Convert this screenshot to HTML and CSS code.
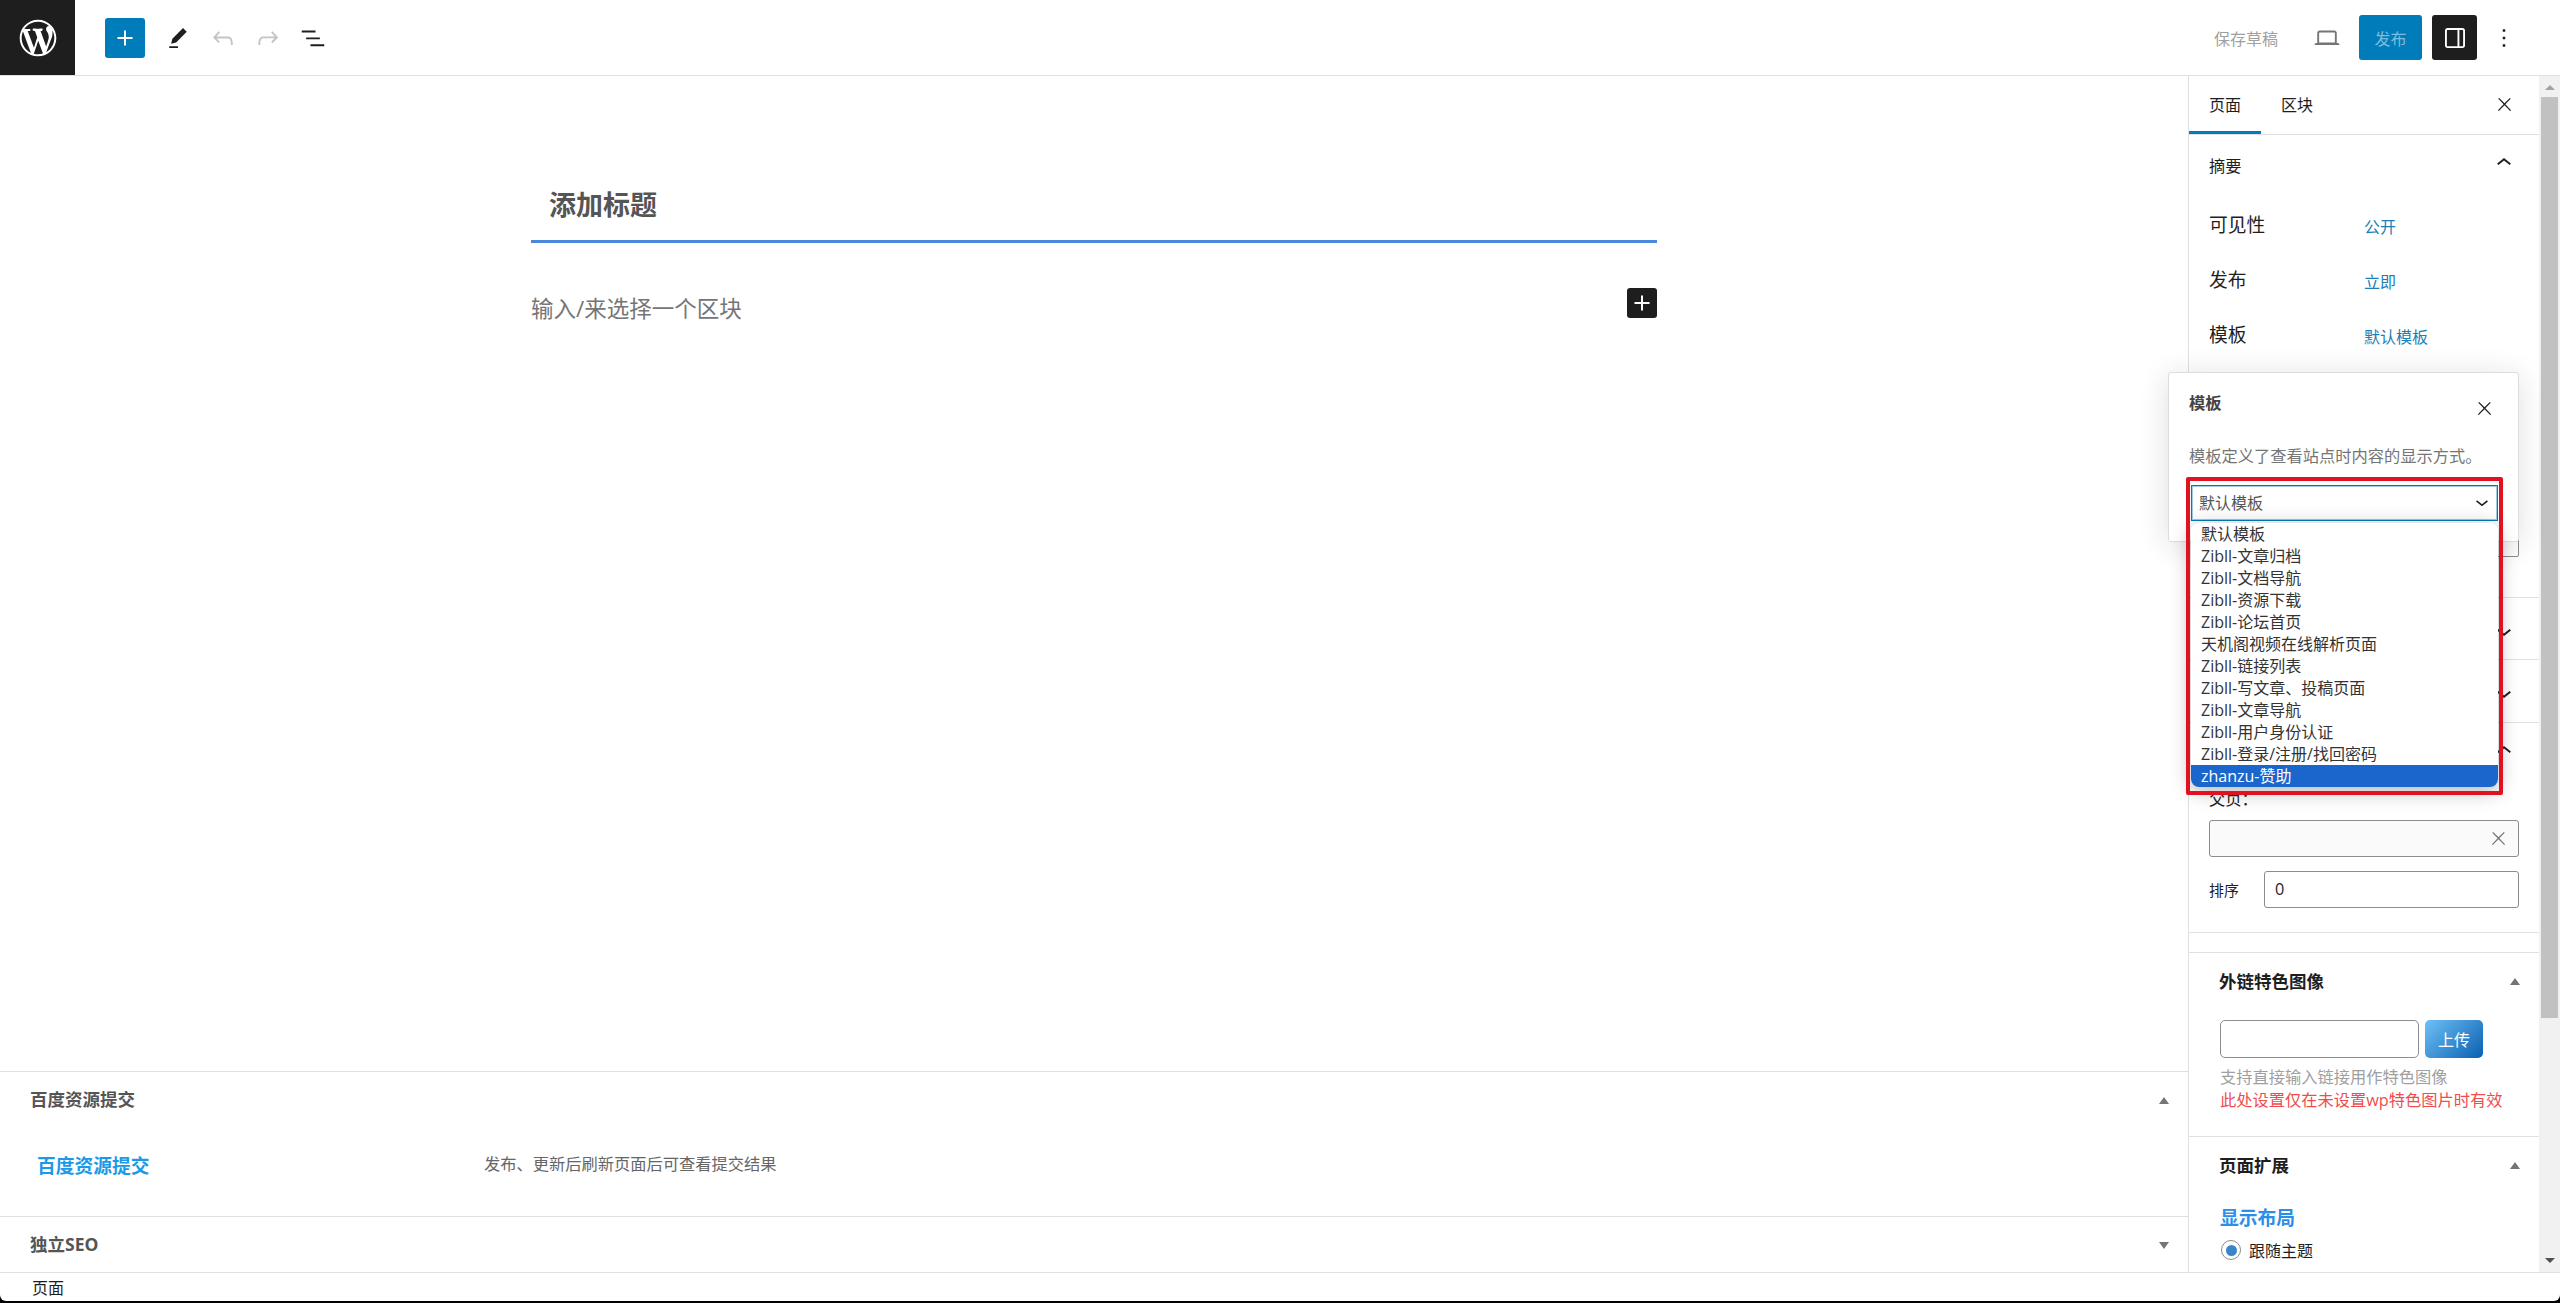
FILE: index.html
```html
<!DOCTYPE html>
<html lang="zh-CN">
<head>
<meta charset="utf-8">
<title>编辑页面</title>
<link rel="stylesheet" href="styles.css">
</head>
<body>
<svg class="sprite" aria-hidden="true">
  <symbol id="i-plus" viewBox="0 0 24 24"><path d="M18 11.2h-5.2V6h-1.6v5.2H6v1.6h5.2V18h1.6v-5.2H18z"/></symbol>
  <symbol id="i-pencil" viewBox="0 0 24 24"><path d="m19 7-3-3-8.5 8.5-1 4 4-1L19 7Zm-7 11.5H5V20h7v-1.5Z"/></symbol>
  <symbol id="i-undo" viewBox="0 0 24 24"><path d="M18.3 11.7c-.6-.6-1.4-.9-2.3-.9H6.7l2.9-3.3-1.1-1-4.5 5L8.5 16l1-1-2.7-2.7H16c.5 0 .9.2 1.3.5 1 1 1 3.4 1 4.5v.3h1.5v-.2c0-1.5 0-4.3-1.5-5.7z"/></symbol>
  <symbol id="i-redo" viewBox="0 0 24 24"><path d="M15.6 6.5l-1.1 1 2.9 3.3H8c-.9 0-1.7.3-2.3.9-1.4 1.5-1.4 4.2-1.4 5.6v.2h1.5v-.3c0-1.1 0-3.5 1-4.5.3-.3.7-.5 1.3-.5h9.2L14.5 15l1.1 1.1 4.6-4.6-4.6-5z"/></symbol>
  <symbol id="i-list" viewBox="0 0 24 24"><path d="M3 6h11v1.5H3V6Zm3.5 5.5h11V13h-11v-1.5ZM21 17H10v1.5h11V17Z"/></symbol>
  <symbol id="i-laptop" viewBox="0 0 24 24"><path d="M20.5 16h-.7V8c0-1.1-.9-2-2-2H6.2c-1.1 0-2 .9-2 2v8h-.7c-.8 0-1.5.7-1.5 1.5h20c0-.8-.7-1.5-1.5-1.5zM5.700 8c0-.3.2-.5.5-.5h11.600c.3 0 .5.2.5.5v7.600H5.700V8z"/></symbol>
  <symbol id="i-drawer" viewBox="0 0 24 24"><path d="M18 4H6c-1.100 0-2 .9-2 2v12c0 1.100.9 2 2 2h12c1.100 0 2-.9 2-2V6c0-1.100-.9-2-2-2zm-4 14.500H6c-.3 0-.5-.2-.5-.5V6c0-.3.2-.5.5-.5h8v13zm4.500-.5c0 .3-.2.500-.5.500h-2.500v-13H18c.3 0 .5.200.5.500v12z"/></symbol>
  <symbol id="i-more" viewBox="0 0 24 24"><path d="M13 19h-2v-2h2v2zm0-6h-2v-2h2v2zm0-6h-2V5h2v2z"/></symbol>
  <symbol id="i-close" viewBox="0 0 24 24"><path d="M13 11.800l6.100-6.300-1-1-6.100 6.200-6.100-6.200-1 1 6.100 6.300-6.500 6.700 1 1 6.500-6.600 6.500 6.600 1-1z"/></symbol>
  <symbol id="i-up" viewBox="0 0 24 24"><path d="M6.500 12.400L12 8l5.500 4.400-.9 1.200L12 10l-4.500 3.600-1-1.200z"/></symbol>
  <symbol id="i-down" viewBox="0 0 24 24"><path d="M17.500 11.600L12 16l-5.500-4.400.9-1.200L12 14l4.500-3.600 1 1.200z"/></symbol>
</svg>

<div class="app">
  <header class="topbar">
    <div class="topbar-left">
      <a class="wp-logo" href="#" aria-label="WordPress">
        <svg class="wp-mark" viewBox="-2 -2 24 24"><path d="M20 10c0-5.510-4.490-10-10-10C4.480 0 0 4.490 0 10c0 5.520 4.480 10 10 10 5.510 0 10-4.480 10-10zM7.780 15.370L4.370 6.220c.550-.020 1.170-.080 1.170-.080.500-.060.440-1.130-.060-1.110 0 0-1.450.110-2.370.110-.180 0-.370 0-.580-.010C4.120 2.690 6.870 1.110 10 1.110c2.330 0 4.450.870 6.050 2.340-.680-.110-1.650.390-1.650 1.580 0 .740.450 1.360.900 2.100.350.610.550 1.360.550 2.460 0 1.490-1.400 5-1.400 5l-3.030-8.370c.540-.020.820-.170.820-.170.500-.050.440-1.250-.060-1.220 0 0-1.440.120-2.380.120-.870 0-2.330-.120-2.330-.120-.500-.030-.560 1.200-.060 1.220l.920.080 1.260 3.410zM17.410 10c.240-.640.740-1.870.430-4.250.700 1.290 1.050 2.710 1.050 4.250 0 3.290-1.730 6.240-4.400 7.780.970-2.590 1.940-5.200 2.920-7.780zM6.100 18.090C3.120 16.650 1.110 13.530 1.110 10c0-1.300.230-2.480.720-3.590C3.250 10.300 4.670 14.200 6.100 18.090zm4.030-6.630l2.580 6.980c-.860.290-1.760.450-2.710.450-.790 0-1.570-.110-2.290-.330.810-2.380 1.620-4.740 2.420-7.100z"/></svg>
      </a>
      <button class="btn-inserter" aria-label="添加区块"><svg class="icon"><use href="#i-plus"/></svg></button>
      <div class="tools">
        <button class="tool" aria-label="工具"><svg class="icon"><use href="#i-pencil"/></svg></button>
        <button class="tool is-disabled" aria-label="撤销"><svg class="icon"><use href="#i-undo"/></svg></button>
        <button class="tool is-disabled" aria-label="重做"><svg class="icon"><use href="#i-redo"/></svg></button>
        <button class="tool" aria-label="列表视图"><svg class="icon"><use href="#i-list"/></svg></button>
      </div>
    </div>
    <div class="topbar-right">
      <span class="save-draft">保存草稿</span>
      <button class="tool is-muted" aria-label="预览"><svg class="icon"><use href="#i-laptop"/></svg></button>
      <button class="btn-publish">发布</button>
      <button class="btn-settings" aria-label="设置"><svg class="icon"><use href="#i-drawer"/></svg></button>
      <button class="tool btn-more" aria-label="选项"><svg class="icon"><use href="#i-more"/></svg></button>
    </div>
  </header>

  <div class="workspace">
    <main class="content">
      <div class="canvas">
        <div class="editor">
          <h1 class="post-title">添加标题</h1>
          <div class="block-row">
            <p class="block-placeholder">输入/来选择一个区块</p>
            <button class="block-add" aria-label="添加区块"><svg class="icon"><use href="#i-plus"/></svg></button>
          </div>
        </div>
      </div>
      <section class="meta-box meta-box-open">
        <div class="meta-head"><h2 class="meta-title">百度资源提交</h2><span class="tri tri-up"></span></div>
        <div class="meta-body">
          <strong class="meta-label">百度资源提交</strong>
          <span class="meta-desc">发布、更新后刷新页面后可查看提交结果</span>
        </div>
      </section>
      <section class="meta-box meta-box-closed">
        <div class="meta-head"><h2 class="meta-title">独立SEO</h2><span class="tri tri-down"></span></div>
      </section>
    </main>

    <aside class="sidebar">
      <div class="sidebar-body">
        <div class="tabs">
          <span class="tab is-active">页面</span>
          <span class="tab">区块</span>
          <svg class="icon-close tabs-close"><use href="#i-close"/></svg>
        </div>

        <section class="panel panel-summary">
          <div class="panel-head"><h3 class="panel-title">摘要</h3><svg class="icon"><use href="#i-up"/></svg></div>
          <div class="sum-row"><span class="sum-label">可见性</span><span class="sum-value">公开</span></div>
          <div class="sum-row"><span class="sum-label">发布</span><span class="sum-value">立即</span></div>
          <div class="sum-row"><span class="sum-label">模板</span><span class="sum-value">默认模板</span></div>
          <div class="hidden-field"></div>
        </section>

        <section class="panel panel-collapsed panel-c1"><svg class="icon"><use href="#i-down"/></svg></section>
        <section class="panel panel-collapsed panel-c2"><svg class="icon"><use href="#i-down"/></svg></section>

        <section class="panel panel-attrs">
          <div class="attrs-head"><svg class="icon"><use href="#i-up"/></svg></div>
          <div class="attr-label">父页：</div>
          <div class="parent-field"><svg class="icon-close"><use href="#i-close"/></svg></div>
          <div class="order-row"><span class="order-label">排序</span><div class="order-field">0</div></div>
        </section>

        <div class="panel panel-spacer"></div>

        <section class="panel panel-image">
          <div class="box-head"><h3 class="box-title">外链特色图像</h3><span class="tri tri-up"></span></div>
          <div class="upload-row"><div class="upload-field"></div><button class="upload-btn">上传</button></div>
          <p class="help">支持直接输入链接用作特色图像</p>
          <p class="warn">此处设置仅在未设置wp特色图片时有效</p>
        </section>

        <section class="panel panel-ext">
          <div class="box-head"><h3 class="box-title">页面扩展</h3><span class="tri tri-up"></span></div>
          <div class="layout-title">显示布局</div>
          <label class="radio-row"><span class="radio"></span>跟随主题</label>
        </section>
      </div>

      <div class="scrollbar">
        <span class="sb-arrow sb-arrow-up"></span>
        <div class="sb-thumb"></div>
        <span class="sb-arrow sb-arrow-down"></span>
      </div>
    </aside>
  </div>

  <footer class="statusbar">页面</footer>

  <div class="popover">
    <div class="popover-head"><h4 class="popover-title">模板</h4><svg class="icon-close popover-close"><use href="#i-close"/></svg></div>
    <p class="popover-desc">模板定义了查看站点时内容的显示方式。</p>
  </div>
  <div class="select-box">默认模板<svg class="select-chev"><use href="#i-down"/></svg></div>
  <ul class="select-list">
    <li>默认模板</li>
    <li>Zibll-文章归档</li>
    <li>Zibll-文档导航</li>
    <li>Zibll-资源下载</li>
    <li>Zibll-论坛首页</li>
    <li>天机阁视频在线解析页面</li>
    <li>Zibll-链接列表</li>
    <li>Zibll-写文章、投稿页面</li>
    <li>Zibll-文章导航</li>
    <li>Zibll-用户身份认证</li>
    <li>Zibll-登录/注册/找回密码</li>
    <li class="is-selected">zhanzu-赞助</li>
  </ul>
  <div class="highlight"></div>
</div>
</body>
</html>
```
FILE: styles.css
```css
* { box-sizing: border-box; }
html, body { margin: 0; padding: 0; }
body {
  background: #000;
  color: #1e1e1e;
  font-family: "Open Sans", "Noto Sans CJK SC", sans-serif;
  font-size: 16.25px;
  height: 1303px;
  overflow: hidden;
}
h1, h2, h3, h4, p, ul { margin: 0; padding: 0; }
button { border: 0; background: none; padding: 0; font: inherit; color: inherit; }
.sprite { display: none; }
.icon { width: 30px; height: 30px; fill: currentColor; display: block; flex: none; }
.icon-close { width: 21px; height: 21px; fill: currentColor; display: block; flex: none; }

.app {
  position: relative;
  width: 2560px;
  height: 1301px;
  background: #fff;
  border-radius: 0 0 6px 6px;
  overflow: hidden;
  display: flex;
  flex-direction: column;
}

/* top bar */
.topbar {
  height: 76px;
  flex: none;
  border-bottom: 1px solid #e0e0e0;
  display: flex;
  justify-content: space-between;
  align-items: center;
}
.topbar-left, .topbar-right, .tools { display: flex; align-items: center; }
.wp-logo {
  width: 75px;
  height: 75px;
  background: #1e1e1e;
  color: #fff;
  display: flex;
  align-items: center;
  justify-content: center;
}
.wp-mark { width: 44px; height: 44px; fill: currentColor; display: block; }
.btn-inserter {
  width: 40px;
  height: 40px;
  margin-left: 30px;
  border-radius: 3px;
  background: #007cba;
  color: #fff;
  display: flex;
  align-items: center;
  justify-content: center;
}
.tools { margin-left: 10px; }
.tool {
  width: 45px;
  height: 45px;
  display: flex;
  align-items: center;
  justify-content: center;
  color: #1e1e1e;
}
.tool.is-disabled { color: #c4c4c4; }
.tool.is-muted { color: #757575; }
.topbar-right { padding-right: 34px; }
.save-draft { color: #a0a0a0; font-size: 16px; margin-right: 26px; }
.btn-publish {
  width: 63px;
  height: 45px;
  margin-left: 10px;
  border-radius: 3px;
  background: #007cba;
  color: #7cbcdc;
  font-size: 16px;
}
.btn-settings {
  width: 45px;
  height: 45px;
  margin-left: 10px;
  border-radius: 3px;
  background: #1e1e1e;
  color: #fff;
  display: flex;
  align-items: center;
  justify-content: center;
}
.btn-more { margin-left: 4px; }

/* workspace */
.workspace { flex: 1; display: flex; min-height: 0; }
.content { width: 2188px; flex: none; display: flex; flex-direction: column; }
.canvas { flex: 1; }
.editor { width: 1126px; margin: 0 auto; padding-top: 99px; }
.post-title {
  font-size: 27px;
  font-weight: 700;
  line-height: 60px;
  color: #555;
  padding: 0 18px 5px;
  border-bottom: 3px solid #4a88da;
}
.block-row { display: flex; justify-content: space-between; align-items: flex-start; margin-top: 45px; }
.block-placeholder { font-size: 22.5px; line-height: 40px; color: #757575; padding-top: 1px; }
.block-add {
  width: 30px;
  height: 30px;
  border-radius: 3px;
  background: #1e1e1e;
  color: #fff;
  display: flex;
  align-items: center;
  justify-content: center;
}

.meta-box { border-top: 1px solid #e0e0e0; flex: none; }
.meta-box-open { height: 145px; }
.meta-box-closed { height: 56px; }
.meta-head {
  height: 56px;
  padding: 0 19px 0 30px;
  display: flex;
  justify-content: space-between;
  align-items: center;
}
.meta-title { font-size: 17.5px; font-weight: 700; color: #555; margin-top: -3px; }
.meta-body { display: flex; align-items: center; height: 72px; padding-left: 37px; }
.meta-label { width: 447px; font-size: 18.75px; font-weight: 700; color: #1a9ae8; }
.meta-desc { color: #666; margin-top: -2px; }

.tri { width: 0; height: 0; border-left: 5px solid transparent; border-right: 5px solid transparent; display: block; }
.tri-up { border-bottom: 7px solid #757575; }
.tri-down { border-top: 7px solid #757575; }

/* sidebar */
.sidebar { flex: 1; display: flex; border-left: 1px solid #e0e0e0; min-width: 0; }
.sidebar-body { width: 350px; flex: none; overflow: hidden; }
.tabs {
  height: 59px;
  border-bottom: 1px solid #e0e0e0;
  display: flex;
  align-items: stretch;
}
.tab { padding: 0 20px 2px; display: flex; align-items: center; font-size: 16px; }
.tab.is-active { box-shadow: inset 0 -3px 0 #007cba; }
.tabs-close { margin: 18px 24px 0 auto; }

.panel { border-top: 1px solid #e0e0e0; }
.panel-summary { height: 462px; border-top: 0; padding: 0 20px; }
.panel-head {
  height: 62px;
  display: flex;
  justify-content: space-between;
  align-items: center;
}
.panel-head .icon { margin-top: -6px; }
.panel-title { font-size: 16.25px; font-weight: 400; margin-top: -2px; }
.sum-row { height: 55px; display: flex; align-items: center; }
.sum-label { width: 155px; font-size: 18.75px; padding-bottom: 2px; }
.sum-value { color: #1a80b5; font-size: 16px; padding-top: 2px; }
.hidden-field {
  width: 310px;
  height: 37px;
  margin-top: 158px;
  border: 1px solid #8c8c8c;
  border-radius: 2px;
}
.panel-collapsed { display: flex; justify-content: flex-end; padding: 18px 20px 0 0; }
.panel-c1 { height: 62px; }
.panel-c2 { height: 63px; }

.panel-attrs { height: 210px; padding: 0 20px; }
.attrs-head { height: 56px; display: flex; justify-content: flex-end; align-items: center; }
.attr-label { height: 24px; line-height: 24px; margin-top: 8px; font-size: 16.25px; }
.parent-field {
  width: 310px;
  height: 37px;
  margin-top: 9px;
  border: 1px solid #8c8c8c;
  border-radius: 3px;
  background: #fafafa;
  display: flex;
  justify-content: flex-end;
  align-items: center;
  padding-right: 9px;
  color: #757575;
}
.order-row { display: flex; align-items: center; margin-top: 14px; }
.order-label { width: 55px; font-size: 15px; }
.order-field {
  width: 255px;
  height: 37px;
  border: 1px solid #8c8c8c;
  border-radius: 3px;
  padding-left: 10px;
  line-height: 35px;
  font-size: 16.25px;
}
.panel-spacer { height: 20px; }

.panel-image { height: 184px; padding: 0 19px 0 30px; }
.box-head { height: 57px; display: flex; justify-content: space-between; align-items: center; }
.box-title { font-size: 17.5px; font-weight: 700; color: #1e1e1e; margin-top: -3px; }
.upload-row { display: flex; gap: 6px; margin-top: 10px; margin-left: 1px; }
.upload-field { width: 199px; height: 38px; border: 1px solid #8c8c8c; border-radius: 5px; }
.upload-btn {
  width: 58px;
  height: 38px;
  border-radius: 5px;
  color: #fff;
  font-size: 16px;
  background: linear-gradient(135deg, #6ec1f7, #0a5fb0);
}
.help { color: #a0a0a0; font-size: 16.25px; line-height: 23px; margin-top: 8px; padding-left: 1px; }
.warn { color: #ef4d4d; font-size: 16.25px; line-height: 23px; padding-left: 1px; }

.panel-ext { padding: 0 19px 0 30px; }
.layout-title { color: #2a8fe8; font-size: 18.75px; font-weight: 700; line-height: 28px; margin-top: 10px; padding-left: 1px; }
.radio-row { display: flex; align-items: center; height: 24px; margin-top: 6px; font-size: 16px; padding-left: 2px; }
.radio {
  width: 20px;
  height: 20px;
  border-radius: 50%;
  border: 1px solid #8c8c8c;
  margin-right: 8px;
  display: flex;
  align-items: center;
  justify-content: center;
}
.radio::after { content: ""; width: 11px; height: 11px; border-radius: 50%; background: #3a85c9; }

.scrollbar {
  width: 21px;
  flex: none;
  background: #f1f1f1;
  display: flex;
  flex-direction: column;
  align-items: flex-start;
  padding-left: 2px;
}
.sb-arrow { width: 0; height: 0; border-left: 5px solid transparent; border-right: 5px solid transparent; margin-left: 4px; }
.sb-arrow-up { border-bottom: 5px solid #a3a3a3; margin-top: 9px; }
.sb-thumb { width: 17px; height: 921px; margin-top: 7px; background: #c1c1c1; }
.sb-arrow-down { border-top: 5px solid #505050; margin-top: auto; margin-bottom: 9px; }

.statusbar {
  height: 29px;
  flex: none;
  border-top: 1px solid #e0e0e0;
  padding-left: 32px;
  font-size: 16px;
  line-height: 30px;
}

/* overlays */
.popover {
  position: absolute;
  left: 2168px;
  top: 372px;
  width: 351px;
  height: 170px;
  background: #fff;
  border: 1px solid #ddd;
  border-radius: 3px;
  padding: 0 20px;
  box-shadow: 0 4px 30px rgba(25, 30, 35, .14);
}
.popover-head { display: flex; justify-content: space-between; align-items: flex-start; }
.popover-title { font-size: 16.25px; font-weight: 700; color: #444; margin-top: 17px; }
.popover-close { margin: 24.5px 3.5px 0 0; }
.popover-desc { color: #757575; font-size: 16.25px; margin-top: 24.5px; }
.select-box {
  position: absolute;
  left: 2191px;
  top: 485px;
  width: 307px;
  height: 36px;
  padding-left: 7px;
  border: 1px solid #007cba;
  box-shadow: inset 0 0 0 1px #9ccbe3;
  color: #555;
  font-size: 16px;
  line-height: 34px;
  background: #fff;
}
.select-chev { position: absolute; right: 2px; top: 3px; width: 26px; height: 26px; fill: #1e1e1e; }
.select-list {
  position: absolute;
  left: 2191px;
  top: 523px;
  width: 307px;
  height: 264px;
  background: #fff;
  border-radius: 8px;
  list-style: none;
  overflow: hidden;
  box-shadow: 0 4px 20px rgba(0, 0, 0, .3);
}
.select-list li { height: 22px; line-height: 22px; padding-left: 10px; font-size: 16px; color: #333; }
.select-list li.is-selected { background: #1a66cc; color: #fff; }
.highlight {
  position: absolute;
  left: 2186px;
  top: 477px;
  width: 317px;
  height: 318px;
  border: 4px solid #e0121f;
  border-radius: 2px;
}
```
